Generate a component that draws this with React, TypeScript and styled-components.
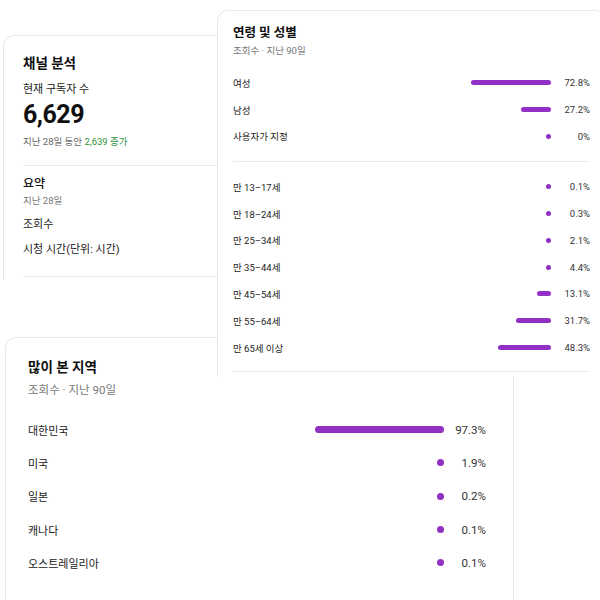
import React from "react";
import styled, { createGlobalStyle } from "styled-components";

const GlobalStyle = createGlobalStyle`
  html, body {
    margin: 0;
    padding: 0;
    background: #ffffff;
  }
  body {
    font-family: Roboto, "Noto Sans CJK KR", sans-serif;
    color: #0f0f0f;
  }
`;

interface Stat {
  label: string;
  value: number;
  text: string;
}

const gender: Stat[] = [
  { label: "여성", value: 72.8, text: "72.8%" },
  { label: "남성", value: 27.2, text: "27.2%" },
  { label: "사용자가 지정", value: 0, text: "0%" },
];

const ages: Stat[] = [
  { label: "만 13–17세", value: 0.1, text: "0.1%" },
  { label: "만 18–24세", value: 0.3, text: "0.3%" },
  { label: "만 25–34세", value: 2.1, text: "2.1%" },
  { label: "만 35–44세", value: 4.4, text: "4.4%" },
  { label: "만 45–54세", value: 13.1, text: "13.1%" },
  { label: "만 55–64세", value: 31.7, text: "31.7%" },
  { label: "만 65세 이상", value: 48.3, text: "48.3%" },
];

const regions: Stat[] = [
  { label: "대한민국", value: 97.3, text: "97.3%" },
  { label: "미국", value: 1.9, text: "1.9%" },
  { label: "일본", value: 0.2, text: "0.2%" },
  { label: "캐나다", value: 0.1, text: "0.1%" },
  { label: "오스트레일리아", value: 0.1, text: "0.1%" },
];

export default function App() {
  return (
    <>
      <GlobalStyle />
      <Canvas>
        {/* channel summary, cut off at the bottom */}
        <Panel $top={35} $left={3} $width={250} $height={245} $z={1}>
          <ChannelBody>
            <Title>채널 분석</Title>
            <Caption>현재 구독자 수</Caption>
            <BigNumber>6,629</BigNumber>
            <Growth>
              지난 28일 동안 <Up>2,639 증가</Up>
            </Growth>
            <Divider $mt={16} />
            <SubTitle>요약</SubTitle>
            <Muted>지난 28일</Muted>
            <Caption $mt={9}>조회수</Caption>
            <Caption $mt={9}>시청 시간(단위: 시간)</Caption>
            <Divider $mt={18} />
          </ChannelBody>
        </Panel>

        {/* top regions, sits under the age card */}
        <Panel $top={337} $left={5} $width={509} $height={280} $z={1}>
          <RegionBody>
            <RegionTitle>많이 본 지역</RegionTitle>
            <RegionSub>조회수 · 지난 90일</RegionSub>
            <RegionList>
              {regions.map((r) => (
                <RegionRow key={r.label}>
                  <RegionLabel>{r.label}</RegionLabel>
                  <BarTrack>
                    <Bar $size={7} style={{ width: Math.max(7, r.value * 1.33) }} />
                  </BarTrack>
                  <RegionPct>{r.text}</RegionPct>
                </RegionRow>
              ))}
            </RegionList>
          </RegionBody>
        </Panel>

        {/* age and gender */}
        <Panel $top={10} $left={217} $width={389} $height={367} $z={2}>
          <AgeBody>
            <SmallTitle>연령 및 성별</SmallTitle>
            <SmallSub>조회수 · 지난 90일</SmallSub>
            <StatList $mt={11.5}>
              {gender.map((g) => (
                <StatRow key={g.label}>
                  <StatLabel>{g.label}</StatLabel>
                  <BarTrack>
                    <Bar $size={5} style={{ width: Math.max(5, g.value * 1.1) }} />
                  </BarTrack>
                  <StatPct>{g.text}</StatPct>
                </StatRow>
              ))}
            </StatList>
            <Divider $mt={11} />
            <StatList $mt={11.5}>
              {ages.map((a) => (
                <StatRow key={a.label}>
                  <StatLabel>{a.label}</StatLabel>
                  <BarTrack>
                    <Bar $size={5} style={{ width: Math.max(5, a.value * 1.1) }} />
                  </BarTrack>
                  <StatPct>{a.text}</StatPct>
                </StatRow>
              ))}
            </StatList>
            <Divider $mt={10} />
          </AgeBody>
        </Panel>
      </Canvas>
    </>
  );
}

const Canvas = styled.div`
  position: relative;
  width: 600px;
  height: 600px;
  overflow: hidden;
  background: #ffffff;
`;

const Panel = styled.section<{
  $top: number;
  $left: number;
  $width: number;
  $height: number;
  $z: number;
}>`
  position: absolute;
  top: ${(p) => p.$top}px;
  left: ${(p) => p.$left}px;
  width: ${(p) => p.$width}px;
  height: ${(p) => p.$height}px;
  z-index: ${(p) => p.$z};
  box-sizing: border-box;
  background: #ffffff;
  border: 1px solid #e9e9e9;
  border-bottom: none;
  border-radius: 11px 11px 0 0;
  overflow: hidden;
`;

const ChannelBody = styled.div`
  display: flex;
  flex-direction: column;
  padding: 18px 0 0 19px;
`;

const Title = styled.h2`
  margin: 0;
  font-size: 13.5px;
  line-height: 18px;
  font-weight: 700;
  color: #0f0f0f;
`;

const Caption = styled.div<{ $mt?: number }>`
  margin-top: ${(p) => p.$mt ?? 10}px;
  font-size: 11px;
  line-height: 16px;
  color: #222;
`;

const BigNumber = styled.div`
  margin-top: 2px;
  font-size: 25px;
  line-height: 30px;
  font-weight: 700;
  color: #0f0f0f;
  letter-spacing: -0.5px;
`;

const Growth = styled.div`
  margin-top: 5px;
  font-size: 9.5px;
  line-height: 14px;
  color: #666;
`;

const Up = styled.span`
  color: #2f9138;
`;

const Divider = styled.hr<{ $mt: number }>`
  margin: ${(p) => p.$mt}px 0 0;
  border: none;
  height: 1px;
  background: #ececec;
`;

const SubTitle = styled.div`
  margin-top: 10px;
  font-size: 12px;
  line-height: 16px;
  font-weight: 500;
  color: #0f0f0f;
`;

const Muted = styled.div`
  margin-top: 2px;
  font-size: 9.5px;
  line-height: 14px;
  color: #777;
`;

const AgeBody = styled.div`
  display: flex;
  flex-direction: column;
  padding: 14px 15px 0 15px;
`;

const SmallTitle = styled.h2`
  margin: 0;
  font-size: 12.5px;
  line-height: 16px;
  font-weight: 700;
  color: #0f0f0f;
`;

const SmallSub = styled.div`
  margin-top: 3px;
  font-size: 9.5px;
  line-height: 14px;
  color: #777;
`;

const StatList = styled.div<{ $mt: number }>`
  margin-top: ${(p) => p.$mt}px;
  display: flex;
  flex-direction: column;
`;

const StatRow = styled.div`
  display: grid;
  grid-template-columns: 1fr 120px 30px;
  column-gap: 9px;
  align-items: center;
  height: 26.8px;
`;

const StatLabel = styled.span`
  font-size: 9.5px;
  color: #222;
`;

const StatPct = styled.span`
  font-size: 9.5px;
  color: #333;
  text-align: right;
`;

const BarTrack = styled.div`
  display: flex;
  justify-content: flex-end;
  align-items: center;
`;

const Bar = styled.div<{ $size: number }>`
  height: ${(p) => p.$size}px;
  border-radius: ${(p) => p.$size}px;
  background: #9131c4;
`;

const RegionBody = styled.div`
  display: flex;
  flex-direction: column;
  padding: 20px 27px 0 22px;
`;

const RegionTitle = styled.h2`
  margin: 0;
  font-size: 13.5px;
  line-height: 18px;
  font-weight: 700;
  color: #0f0f0f;
`;

const RegionSub = styled.div`
  margin-top: 6px;
  font-size: 11.5px;
  line-height: 16px;
  color: #777;
`;

const RegionList = styled.div`
  margin-top: 15px;
  display: flex;
  flex-direction: column;
`;

const RegionRow = styled.div`
  display: grid;
  grid-template-columns: 1fr 140px 33px;
  column-gap: 9px;
  align-items: center;
  height: 33.3px;
`;

const RegionLabel = styled.span`
  font-size: 11px;
  color: #222;
`;

const RegionPct = styled.span`
  font-size: 11.5px;
  color: #333;
  text-align: right;
`;
